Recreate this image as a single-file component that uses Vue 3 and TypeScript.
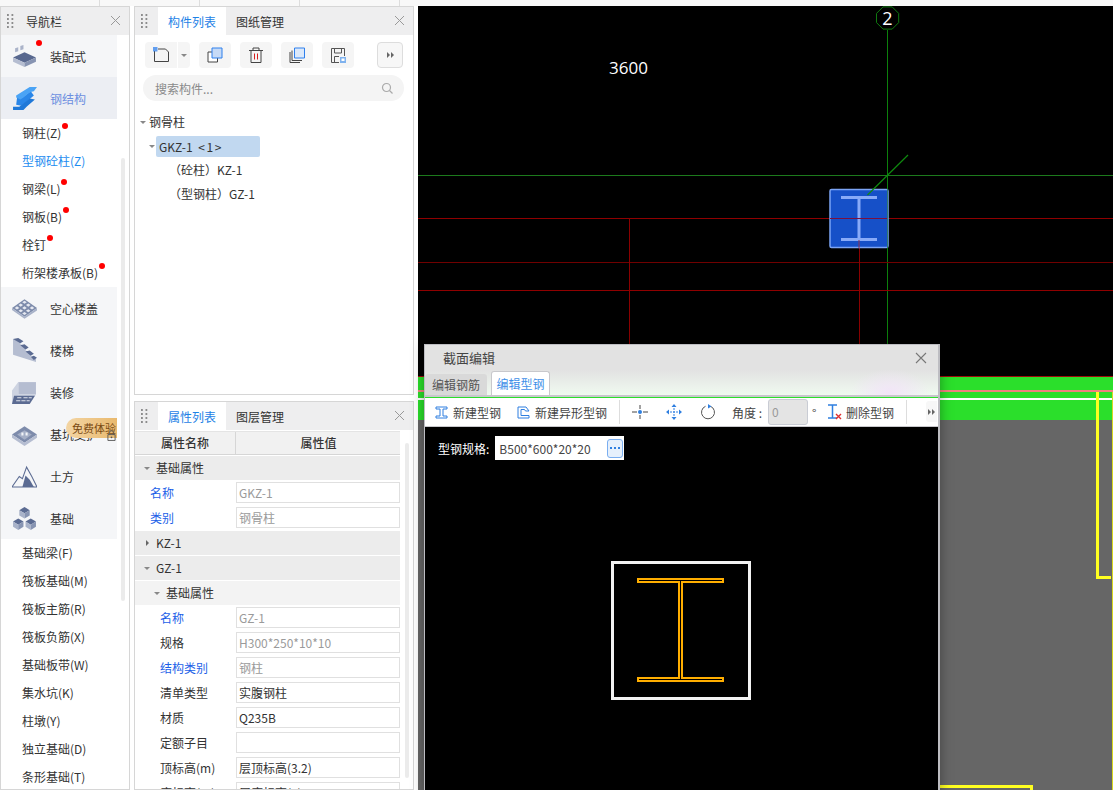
<script setup lang="ts">
interface NavRow {
  label: string;
  icon?: string;
  dot?: number;
  active?: boolean;
  link?: boolean;
}

// 导航栏：icon 的是大行，其余是子项；dot 为红点相对文字的 x
const navRows: NavRow[] = [
  { label: '装配式', icon: 'prefab' },
  { label: '钢结构', icon: 'steel', active: true },
  { label: '钢柱(Z)', dot: 40 },
  { label: '型钢砼柱(Z)', link: true },
  { label: '钢梁(L)', dot: 39 },
  { label: '钢板(B)', dot: 41 },
  { label: '栓钉', dot: 25 },
  { label: '桁架楼承板(B)', dot: 77 },
  { label: '空心楼盖', icon: 'slab' },
  { label: '楼梯', icon: 'stair' },
  { label: '装修', icon: 'finish' },
  { label: '基坑支护', icon: 'pit' },
  { label: '土方', icon: 'earth' },
  { label: '基础', icon: 'found' },
  { label: '基础梁(F)' },
  { label: '筏板基础(M)' },
  { label: '筏板主筋(R)' },
  { label: '筏板负筋(X)' },
  { label: '基础板带(W)' },
  { label: '集水坑(K)' },
  { label: '柱墩(Y)' },
  { label: '独立基础(D)' },
  { label: '条形基础(T)' },
];

interface PropRow {
  kind: 'group' | 'sub' | 'field';
  name: string;
  value?: string;
  blue?: boolean;
  muted?: boolean;
  collapsed?: boolean;
  indent?: boolean;
}

const propRows: PropRow[] = [
  { kind: 'group', name: '基础属性' },
  { kind: 'field', name: '名称', value: 'GKZ-1', blue: true, muted: true },
  { kind: 'field', name: '类别', value: '钢骨柱', blue: true, muted: true },
  { kind: 'group', name: 'KZ-1', collapsed: true },
  { kind: 'group', name: 'GZ-1' },
  { kind: 'sub', name: '基础属性' },
  { kind: 'field', name: '名称', value: 'GZ-1', blue: true, muted: true, indent: true },
  { kind: 'field', name: '规格', value: 'H300*250*10*10', muted: true, indent: true },
  { kind: 'field', name: '结构类别', value: '钢柱', blue: true, muted: true, indent: true },
  { kind: 'field', name: '清单类型', value: '实腹钢柱', indent: true },
  { kind: 'field', name: '材质', value: 'Q235B', indent: true },
  { kind: 'field', name: '定额子目', value: '', indent: true },
  { kind: 'field', name: '顶标高(m)', value: '层顶标高(3.2)', indent: true },
  { kind: 'field', name: '底标高(m)', value: '层底标高(0)', indent: true },
];

// 空心楼盖图标上的 3x3 小格
const slabCells: string = [
  [12, 6], [8.4, 8.7], [15.6, 8.7], [4.8, 11.4], [12, 11.4], [19.2, 11.4], [8.4, 14.1], [15.6, 14.1], [12, 16.8],
].map(([x, y]) => `M${x - 2.2} ${y}l2.2-1.5 2.2 1.5-2.2 1.5z`).join('');
</script>

<template>
  <div class="app">
    <div class="top-strip">
      <i style="left: 99px"></i><i style="left: 199px"></i><i style="left: 299px"></i><i style="left: 399px"></i>
    </div>
    <div class="main">
      <!-- 导航栏 -->
      <aside class="nav panel">
        <header class="panel-head">
          <span class="grip"></span>
          <span class="nav-title">导航栏</span>
          <span class="close"></span>
        </header>
        <div class="nav-body">
          <div class="nav-list">
            <div
              v-for="row in navRows"
              :key="row.label"
              :class="row.icon ? ['nav-big', { active: row.active }] : ['nav-sub', { link: row.link }]"
            >
              <svg v-if="row.icon" class="nav-icon" viewBox="0 0 24 24">
                <template v-if="row.icon === 'prefab'">
                  <path d="M3 4l3-1v4l-3 1zM8 2l3-1v4l-3 1z" fill="#aab3c9" />
                  <path d="M1 13l11-5 11 5-11 5z" fill="#58688f" />
                  <path d="M1 13l11 5v4L1 17z" fill="#b5bdd1" />
                  <path d="M23 13l-11 5v4l11-5z" fill="#8794b2" />
                </template>
                <template v-else-if="row.icon === 'steel'">
                  <path d="M5 10l5 1 8-6 3 4-7 6-5 4-5-1z" fill="#2a86e8" />
                  <path d="M4 9L17 1h7l-3 4-4 1-6 5-3 2-4-2z" fill="#4aa3f5" />
                  <path d="M1 20h6l10-8 5 1-8 7-3 3H1z" fill="#1f78d8" />
                </template>
                <template v-else-if="row.icon === 'slab'">
                  <path d="M0 11.400L12 3l12 8.400-12 8.400z" fill="#7d8bab" />
                  <path d="M0 11.400l12 8.400v2L0 13.400zM24 11.400l-12 8.400v2l12-8z" fill="#a8b2c9" />
                  <path :d="slabCells" fill="#e6e9f1" />
                </template>
                <template v-else-if="row.icon === 'stair'">
                  <path d="M1 1l7 1v4l5 2v4l5 2v4l5 2v3L1 16z" fill="#b5bdd1" />
                  <path d="M1 1l5-1 5 3-3 2zM8 7l4-1 4 3-3 2zM13 13l4-1 4 3-3 2zM18 18l3-1 3 2-3 2z" fill="#5b6b92" />
                </template>
                <template v-else-if="row.icon === 'finish'">
                  <path d="M6 2h17v12H6z" fill="#b5bdd1" />
                  <path d="M6 2L0 10v13h17l6-9H6z" fill="#cdd3e1" />
                  <path d="M2 15h20l-5 8H0z" fill="#5b6b92" />
                  <path d="M5 17h4M11 17h4M16 17h3M4 20h4M9 20h4M14 20h3" stroke="#dfe3ec" stroke-width="1" />
                </template>
                <template v-else-if="row.icon === 'pit'">
                  <path d="M0 12L12 4l12 8-12 8z" fill="#7d8bab" />
                  <path d="M0 12l12 8v3L0 15zM24 12l-12 8v3l12-8z" fill="#b5bdd1" />
                  <path d="M5 12l7-4 7 4-7 5z" fill="#a5afc6" />
                  <path d="M9 13v-3h2v3zM13 13v-3h2v3z" fill="#f2f4f8" />
                </template>
                <template v-else-if="row.icon === 'earth'">
                  <path d="M0 22L7 12l3 2 4-11 5 9 5 10z" fill="none" stroke="#5b6b92" stroke-width="1" />
                  <path d="M10 22l3-11 4 4 4 7z" fill="#5b6b92" />
                </template>
                <template v-else>
                  <path d="M7 4l5-3 5 3-5 3zM1 15l5-3 5 3-5 3zM13 15l5-3 5 3-5 3z" fill="#5b6b92" />
                  <path d="M7 4l5 3v5l-5-3zM1 15l5 3v5l-5-3zM13 15l5 3v5l-5-3z" fill="#a8b2c9" />
                  <path d="M17 4l-5 3v5l5-3zM11 15l-5 3v5l5-3zM23 15l-5 3v5l5-3z" fill="#8794b2" />
                </template>
              </svg>
              <span class="nav-label">
                {{ row.label }}
                <i v-if="row.dot" class="dot" :style="{ left: row.dot + 'px' }"></i>
              </span>
            </div>
          </div>
          <div class="nav-track"></div>
          <i class="dot top-dot"></i>
          <div class="trial">免费体验</div>
          <svg class="lock" viewBox="0 0 10 12"><path d="M1 5h8v6.500H1zM3 5V2.500a2 2 0 0 1 4 0V5" fill="none" stroke="#555" /><circle cx="5" cy="8" r="1" fill="#555" /></svg>
        </div>
      </aside>

      <div class="middle">
        <!-- 构件列表 -->
        <section class="panel list-panel">
          <header class="panel-head">
            <span class="grip"></span>
            <span class="tab on">构件列表</span>
            <span class="tab">图纸管理</span>
            <span class="close"></span>
          </header>
          <div class="tools">
            <span class="tool first">
              <svg width="16" height="16" viewBox="0 0 16 16"><path d="M1.500 4v10.500h14V5l-3-3H5" fill="none" stroke="#444" /><path d="M0 0h4.500v4.500H0z" fill="#2f80ed" opacity=".75" /></svg>
            </span>
            <span class="tool caret-box"><i class="caret down"></i></span>
            <span class="tool gap-a">
              <svg width="16" height="16" viewBox="0 0 16 16"><path d="M1 5h9.500v10H1z" fill="#fff" stroke="#444" /><path d="M5 1h10v10H5z" fill="#c6daf6" stroke="#2f80ed" /></svg>
            </span>
            <span class="tool gap-b">
              <svg width="16" height="16" viewBox="0 0 16 16"><path d="M1 3.500h14M5 3V1h6v2M3 4v11.500h10V4" fill="none" stroke="#444" /><path d="M6.500 6.500v6M9.500 6.500v6" stroke="#d81e1e" /></svg>
            </span>
            <span class="tool gap-b">
              <svg width="16" height="16" viewBox="0 0 16 16"><path d="M1 5v10.500h10M3 3.500v10h10" fill="none" stroke="#444" /><path d="M5.500 1h10v10h-10z" fill="#dce9fa" stroke="#2f80ed" /></svg>
            </span>
            <span class="tool gap-b">
              <svg width="16" height="16" viewBox="0 0 16 16"><path d="M9 15.500H1.500v-14h13V9M4.500 15V9.500H9M4.500 2v4h7V2" fill="none" stroke="#555" /><path d="M10 10h6v6h-6z" fill="#7fb2ee" /><path d="M11.500 11.500h3v2.500h-3z" fill="#fff" /></svg>
            </span>
            <span class="more"><i class="caret right"></i><i class="caret right"></i></span>
          </div>
          <div class="search">
            <span>搜索构件...</span>
            <svg width="12" height="12" viewBox="0 0 12 12"><circle cx="5.500" cy="5.500" r="4" fill="none" stroke="#aaa" stroke-width="1.200" /><path d="M8.500 8.500l3 3" stroke="#aaa" stroke-width="1.200" /></svg>
          </div>
          <div class="tree">
            <div class="tree-row"><i class="caret down"></i>钢骨柱</div>
            <div class="tree-row second"><i class="caret down"></i><span class="picked">GKZ-1 <em>&lt;1&gt;</em></span></div>
            <div class="tree-row leaf">（砼柱）KZ-1</div>
            <div class="tree-row leaf">（型钢柱）GZ-1</div>
          </div>
        </section>

        <!-- 属性列表 -->
        <section class="panel prop-panel">
          <header class="panel-head">
            <span class="grip"></span>
            <span class="tab on">属性列表</span>
            <span class="tab">图层管理</span>
            <span class="close"></span>
          </header>
          <div class="prop-body">
            <div class="prop-table">
              <div class="prop-head"><span>属性名称</span><span>属性值</span></div>
              <template v-for="(row, i) in propRows" :key="i">
                <div v-if="row.kind !== 'field'" class="prop-group" :class="{ sub: row.kind === 'sub' }">
                  <i class="caret" :class="row.collapsed ? 'right' : 'down'"></i>{{ row.name }}
                </div>
                <div v-else class="prop-field" :class="{ indent: row.indent }">
                  <span class="prop-name" :class="{ blue: row.blue }">{{ row.name }}</span>
                  <span class="prop-value" :class="{ muted: row.muted }">{{ row.value }}</span>
                </div>
              </template>
            </div>
            <div class="prop-thumb"></div>
          </div>
        </section>
      </div>

      <!-- 绘图区 -->
      <div class="canvas">
        <svg class="cad" viewBox="418 6 695 784" shape-rendering="crispEdges">
          <rect x="418" y="6" width="695" height="784" fill="#000" />
          <text x="609" y="74" class="cad-text" font-size="17">3600</text>
          <path d="M418 175.500H1113" stroke="#1c7a1c" />
          <rect x="887" y="30" width="1" height="315" fill="#0c800c" />
          <path d="M418 218.500H1113M418 290.500H1113" stroke="#8f0000" />
          <path d="M418 262.500H1113" stroke="#700000" />
          <rect x="629" y="218" width="1" height="127" fill="#8a0000" />
          <rect x="859" y="248" width="1" height="97" fill="#8a0000" />
          <g shape-rendering="auto">
            <path d="M883 6.900h9.200l6.500 6.500v9.200l-6.500 6.500H883l-6.500-6.500v-9.200z" fill="none" stroke="#0f7a0f" />
            <text x="887.500" y="25" text-anchor="middle" class="cad-text" font-size="18">2</text>
            <rect x="830" y="189.500" width="58" height="58" rx="1.500" fill="#1650c8" stroke="#7ba4f5" stroke-width="1.500" />
            <path d="M841 197.500h36M841 239.500h36M859 198v41" stroke="#88aaf8" stroke-width="3" fill="none" />
            <path d="M830 218.500h58" stroke="#7a1040" />
            <path d="M859 240v8" stroke="#8f3050" />
            <path d="M867.500 195L908 155" stroke="#0f8a0f" stroke-width="1.200" />
          </g>
          <path d="M887.500 189v59" stroke="#2f7a70" />
          <rect x="418" y="377" width="695" height="43" fill="#2bdf2b" />
          <rect x="418" y="420" width="695" height="370" fill="#666" />
          <path d="M418 376.500H1113" stroke="#a00c0c" />
          <path d="M418 390.500H1113" stroke="#f08080" stroke-width="2" />
          <path d="M418 398.500H1113" stroke="#fff" stroke-width="2" />
          <path d="M1097.500 392V577.500H1111" fill="none" stroke="#ffff20" stroke-width="3" />
          <path d="M1112.500 392V790" stroke="#d8d820" />
          <path d="M930 786.500H1031V790" fill="none" stroke="#ffff20" stroke-width="3" />
        </svg>

        <!-- 截面编辑 弹窗 -->
        <div class="dialog">
          <div class="dialog-glass">
            <div class="dialog-title">
              <span>截面编辑</span>
              <svg width="12" height="12" viewBox="0 0 12 12"><path d="M1 1l10 10M11 1L1 11" stroke="#777" stroke-width="1.100" /></svg>
            </div>
            <div class="dialog-tabs">
              <span class="dtab">编辑钢筋</span>
              <span class="dtab on">编辑型钢</span>
            </div>
          </div>
          <div class="dialog-tools">
            <span class="dbtn">
              <svg width="13" height="13" viewBox="0 0 13 13"><path d="M1 1h11v2H8v7h4v2H1v-2h4V3H1z" fill="#fff" stroke="#2f7fe0" /></svg>
              新建型钢
            </span>
            <span class="dbtn wide">
              <svg width="13" height="13" viewBox="0 0 13 13"><path d="M1 1h8l3 4H8.500l-1-1.500H4v6h8V12H1z" fill="#fff" stroke="#2f7fe0" /></svg>
              新建异形型钢
            </span>
            <i class="dsep"></i>
            <svg class="dico" width="16" height="16" viewBox="0 0 16 16"><path d="M0 8h5M11 8h5M8 1v4M8 11v4" stroke="#444" /><circle cx="8" cy="8" r="2" fill="#2f7fe0" /></svg>
            <svg class="dico" width="16" height="16" viewBox="0 0 16 16"><path d="M8 1v14M1 8h14" stroke="#2f7fe0" stroke-dasharray="2 1" /><path d="M8 0l2.500 3h-5zM8 16l2.500-3h-5zM0 8l3-2.500v5zM16 8l-3-2.500v5z" fill="#2f7fe0" /></svg>
            <svg class="dico" width="16" height="16" viewBox="0 0 16 16"><path d="M10.500 2.300A6.500 6.500 0 1 1 5.500 2.300" fill="none" stroke="#555" /><path d="M8 0l3.500 2.500L8 4.500z" fill="#2f7fe0" /></svg>
            <span class="angle-label">角度 :</span>
            <span class="angle-input">0</span>
            <span class="deg">°</span>
            <span class="dbtn del">
              <svg width="15" height="16" viewBox="0 0 15 16"><path d="M1 1h9M1 14h9M5.500 1v13" stroke="#2f7fe0" stroke-width="1.500" fill="none" /><path d="M9 10l5 5M14 10l-5 5" stroke="#e03030" stroke-width="1.400" /></svg>
              删除型钢
            </span>
            <i class="dsep end"></i>
            <span class="dmore"><i class="caret right"></i><i class="caret right"></i></span>
          </div>
          <div class="section-view">
            <div class="spec">
              <span class="spec-label">型钢规格:</span>
              <div class="spec-box">
                <span>B500*600*20*20</span>
                <span class="spec-btn">
                  <svg width="10" height="3" viewBox="0 0 10 3"><path d="M0 0h2v2H0zM4 0h2v2H4zM8 0h2v2H8z" fill="#2f7fe0" /></svg>
                </span>
              </div>
            </div>
            <svg class="section-draw" width="140" height="139" viewBox="0 0 140 139" shape-rendering="crispEdges">
              <rect x="1.500" y="1.500" width="137" height="136" fill="none" stroke="#f2f2f2" stroke-width="3" />
              <path d="M27 18h85v3H71v96h41v3H27v-3h41V21H27z" fill="none" stroke="#ffae00" stroke-width="2" />
            </svg>
          </div>
        </div>
      </div>
    </div>
  </div>
</template>

<style scoped>
.app {
  width: 1113px;
  height: 790px;
  overflow: hidden;
  background: #fff;
  font-family: "Noto Sans CJK SC", "Microsoft YaHei", sans-serif;
  font-size: 12px;
  color: #333;
  display: flex;
  flex-direction: column;
}

.top-strip {
  height: 6px;
  flex: none;
  position: relative;
  background: #f8f8f8;
}

.top-strip i {
  position: absolute;
  top: 0;
  width: 1px;
  height: 6px;
  background: #ddd;
}

.main {
  flex: 1;
  display: flex;
  min-height: 0;
}

.panel {
  border: 1px solid #d6d6d6;
  background: #fff;
  box-sizing: border-box;
  display: flex;
  flex-direction: column;
  overflow: hidden;
}

.panel-head {
  height: 28px;
  flex: none;
  background: #eeeeef;
  display: flex;
  align-items: stretch;
  position: relative;
}

.grip {
  width: 7px;
  height: 14px;
  margin: 7px 10px 0 6px;
  background-image: radial-gradient(circle at 1px 1px, #8c8c8c 1.100px, transparent 1.200px);
  background-size: 4.500px 4px;
}

.close {
  position: absolute;
  right: 9px;
  top: 9px;
  width: 9px;
  height: 9px;
  background:
    linear-gradient(45deg, transparent 46%, #999 46%, #999 54%, transparent 54%),
    linear-gradient(-45deg, transparent 46%, #999 46%, #999 54%, transparent 54%);
}

.nav {
  width: 130px;
  flex: none;
}

.nav-title {
  line-height: 29px;
  margin-left: 2px;
}

.nav-body {
  flex: 1;
  position: relative;
  display: flex;
  min-height: 0;
}

.nav-list {
  width: 116px;
  flex: none;
}

.nav-big {
  height: 42px;
  background: #f5f6f8;
  display: flex;
  align-items: center;
}

.nav-big.active {
  background: #eceef3;
  color: #6d8fe0;
}

.nav-icon {
  width: 25px;
  height: 25px;
  margin: 0 13px 0 11px;
  flex: none;
}

.nav-sub {
  height: 28px;
  line-height: 28px;
  padding-left: 21px;
}

.nav-sub.link {
  color: #1c8cf0;
}

.nav-label {
  position: relative;
  white-space: nowrap;
}

.dot {
  position: absolute;
  top: -4px;
  width: 6px;
  height: 6px;
  border-radius: 50%;
  background: #f00;
}

.nav-sub .dot {
  top: -1px;
}

.top-dot {
  left: 35px;
  top: 5px;
}

.nav-track {
  position: absolute;
  left: 120px;
  top: 123px;
  width: 4px;
  height: 443px;
  background: #ebebeb;
  border-radius: 2px;
}

.trial {
  position: absolute;
  left: 65px;
  top: 383px;
  width: 51px;
  height: 20px;
  line-height: 20px;
  padding-left: 6px;
  box-sizing: border-box;
  border-radius: 10px 0 0 10px;
  background: linear-gradient(90deg, #f3d5a4, #e9b96e);
  color: #7a4a12;
  font-size: 11px;
  white-space: nowrap;
}

.lock {
  position: absolute;
  left: 106px;
  top: 395px;
  width: 9px;
  height: 11px;
}

.middle {
  width: 280px;
  flex: none;
  margin: 0 4px;
  display: flex;
  flex-direction: column;
  gap: 6px;
}

.list-panel {
  height: 389px;
  flex: none;
}

.prop-panel {
  flex: 1;
  min-height: 0;
}

.tab {
  width: 68px;
  text-align: center;
  line-height: 29px;
}

.tab.on {
  background: #fff;
  color: #1e82e6;
}

.tools {
  display: flex;
  align-items: center;
  padding: 7px 10px 0;
  height: 26px;
}

.tool {
  width: 32px;
  height: 26px;
  border-radius: 4px;
  background: #f5f5f5;
  display: flex;
  align-items: center;
  justify-content: center;
  flex: none;
}

.tool.first {
  border-radius: 4px 0 0 4px;
}

.caret-box {
  width: 12px;
  margin-left: 1px;
  border-radius: 0 4px 4px 0;
}

.gap-a,
.gap-b {
  margin-left: 9px;
}

.more,
.dmore {
  display: flex;
  align-items: center;
  justify-content: center;
  gap: 1px;
  width: 24px;
  height: 24px;
  margin-left: auto;
  border: 1px solid #ddd;
  border-radius: 4px;
  background: #f7f7f7;
}

.caret {
  display: inline-block;
  width: 0;
  height: 0;
  flex: none;
}

.caret.down {
  border-left: 3px solid transparent;
  border-right: 3px solid transparent;
  border-top: 3px solid #888;
}

.caret.right {
  border-top: 3px solid transparent;
  border-bottom: 3px solid transparent;
  border-left: 3px solid #666;
}

.search {
  height: 26px;
  margin: 7px 9px 0 8px;
  padding: 0 11px 0 12px;
  border-radius: 13px;
  background: #f4f4f4;
  color: #8a8a8a;
  display: flex;
  align-items: center;
  justify-content: space-between;
}

.tree {
  padding-top: 9px;
}

.tree-row {
  height: 24px;
  line-height: 24px;
  display: flex;
  align-items: center;
  padding-left: 5px;
  white-space: nowrap;
}

.tree-row .caret {
  margin-right: 3px;
}

.second {
  padding-left: 14px;
}

.picked {
  background: #c1d8f0;
  width: 104px;
  height: 21px;
  line-height: 21px;
  padding-left: 3px;
  margin-left: -2px;
  border-radius: 2px;
  box-sizing: border-box;
}

.picked em {
  font-style: normal;
  letter-spacing: 1.500px;
  margin-left: 3px;
}

.leaf {
  padding-left: 34px;
}

.prop-body {
  flex: 1;
  display: flex;
  min-height: 0;
}

.prop-table {
  width: 265px;
  flex: none;
}

.prop-head {
  height: 22px;
  line-height: 22px;
  margin-top: 1px;
  display: grid;
  grid-template-columns: 100px 166px;
  background: #f1f1f1;
  border-bottom: 1px solid #d6d6d6;
  border-top: 1px solid #e4e4e4;
  box-sizing: content-box;
  font-weight: 500;
  text-align: center;
}

.prop-head span + span {
  border-left: 1px solid #d6d6d6;
}

.prop-group {
  height: 24px;
  line-height: 24px;
  margin-top: 1px;
  background: #ececec;
  display: flex;
  align-items: center;
  padding-left: 9px;
}

.prop-group .caret {
  margin-right: 6px;
}

.prop-group .caret.right {
  margin-left: 2px;
  margin-right: 7px;
}

.prop-group.sub {
  padding-left: 19px;
  background: #f3f3f3;
}

.prop-field {
  height: 25px;
  display: flex;
  align-items: center;
}

.prop-name {
  width: 101px;
  padding-left: 15px;
  box-sizing: border-box;
  flex: none;
  white-space: nowrap;
}

.indent .prop-name {
  padding-left: 25px;
}

.prop-name.blue {
  color: #1c5fe8;
}

.prop-value {
  width: 164px;
  height: 21px;
  line-height: 19px;
  padding-left: 2px;
  box-sizing: border-box;
  border: 1px solid #e0e0e0;
  white-space: nowrap;
}

.prop-value.muted {
  color: #9a9a9a;
}

.prop-thumb {
  width: 4px;
  height: 335px;
  margin: 13px 0 0 5px;
  background: #ebebeb;
  border-radius: 3px;
}

.canvas {
  flex: 1;
  position: relative;
  min-width: 0;
}

.cad {
  display: block;
  width: 100%;
  height: 100%;
}

.cad-text {
  fill: #fff;
  font-family: "Open Sans", sans-serif;
}

.dialog {
  position: absolute;
  left: 6px;
  top: 338px;
  width: 516px;
  height: 452px;
  border: 1px solid #bdbdc2;
  border-bottom: 0;
  border-right-width: 2px;
  box-sizing: border-box;
  display: flex;
  flex-direction: column;
  box-shadow: 0 0 12px rgba(0, 0, 0, 0.35);
}

.dialog-glass {
  height: 52px;
  flex: none;
  background:
    radial-gradient(ellipse 40px 24px at 465px 48px, #f2e4f8 0, transparent 100%),
    linear-gradient(180deg, #e2e2e2 0, #e2e2e2 50%, #f0faf0 100%);
  border-bottom: 2px solid #c8c8cc;
  box-sizing: border-box;
  position: relative;
}

.dialog-title {
  height: 25px;
  padding: 0 11px 0 18px;
  display: flex;
  align-items: center;
  justify-content: space-between;
  font-size: 13px;
  color: #444;
}

.dialog-tabs {
  display: flex;
  align-items: flex-end;
  height: 25px;
  gap: 4px;
}

.dtab {
  width: 62px;
  height: 21px;
  line-height: 21px;
  text-align: center;
  background: #d9d9d9;
  color: #555;
  border-radius: 3px 3px 0 0;
}

.dtab.on {
  width: 59px;
  height: 24px;
  line-height: 24px;
  background: #fff;
  color: #3f8fe8;
  border: 1px solid #c8c8cc;
  border-bottom: 0;
  box-sizing: border-box;
}

.dialog-tools {
  height: 28px;
  flex: none;
  background: #fff;
  border-bottom: 1px solid #c8c8cc;
  box-sizing: content-box;
  display: flex;
  align-items: center;
  padding-left: 10px;
  margin-top: 1px;
  white-space: nowrap;
  position: relative;
  color: #444;
}

.dbtn {
  display: flex;
  align-items: center;
  gap: 5px;
}

.dbtn.wide {
  margin-left: 16px;
}

.dsep {
  width: 1px;
  height: 24px;
  background: #ddd;
  margin: 0 12px;
  flex: none;
}

.dico {
  margin-right: 18px;
  flex: none;
}

.angle-label {
  margin-left: -2px;
}

.angle-input {
  width: 40px;
  height: 26px;
  line-height: 24px;
  margin-left: 6px;
  padding-left: 3px;
  border: 1px solid #c9ccd4;
  border-radius: 3px;
  background: #e4e4e4;
  color: #999;
  box-sizing: border-box;
}

.deg {
  margin-left: 4px;
  width: 12px;
}

.del {
  margin-left: 3px;
  gap: 4px;
}

.dsep.end {
  margin: 0 0 0 12px;
}

.dmore {
  position: absolute;
  right: 1px;
  top: 3px;
  width: 11px;
  height: 21px;
  border: 0;
  border-radius: 3px 0 0 3px;
}

.section-view {
  flex: 1;
  background: #000;
  position: relative;
  min-height: 0;
}

.spec {
  display: flex;
  align-items: center;
  height: 24px;
  padding: 9px 0 0 13px;
  color: #fff;
}

.spec-box {
  margin-left: 6px;
  width: 129px;
  height: 24px;
  background: #fff;
  color: #444;
  display: flex;
  align-items: center;
  justify-content: space-between;
  padding: 0 1px 0 4px;
  box-sizing: border-box;
}

.spec-btn {
  width: 16px;
  height: 19px;
  border: 1px solid #7aaef0;
  border-radius: 3px;
  background: #e6f0fc;
  display: flex;
  align-items: center;
  justify-content: center;
  box-sizing: border-box;
}

.section-draw {
  position: absolute;
  left: 186px;
  top: 134px;
}
</style>
